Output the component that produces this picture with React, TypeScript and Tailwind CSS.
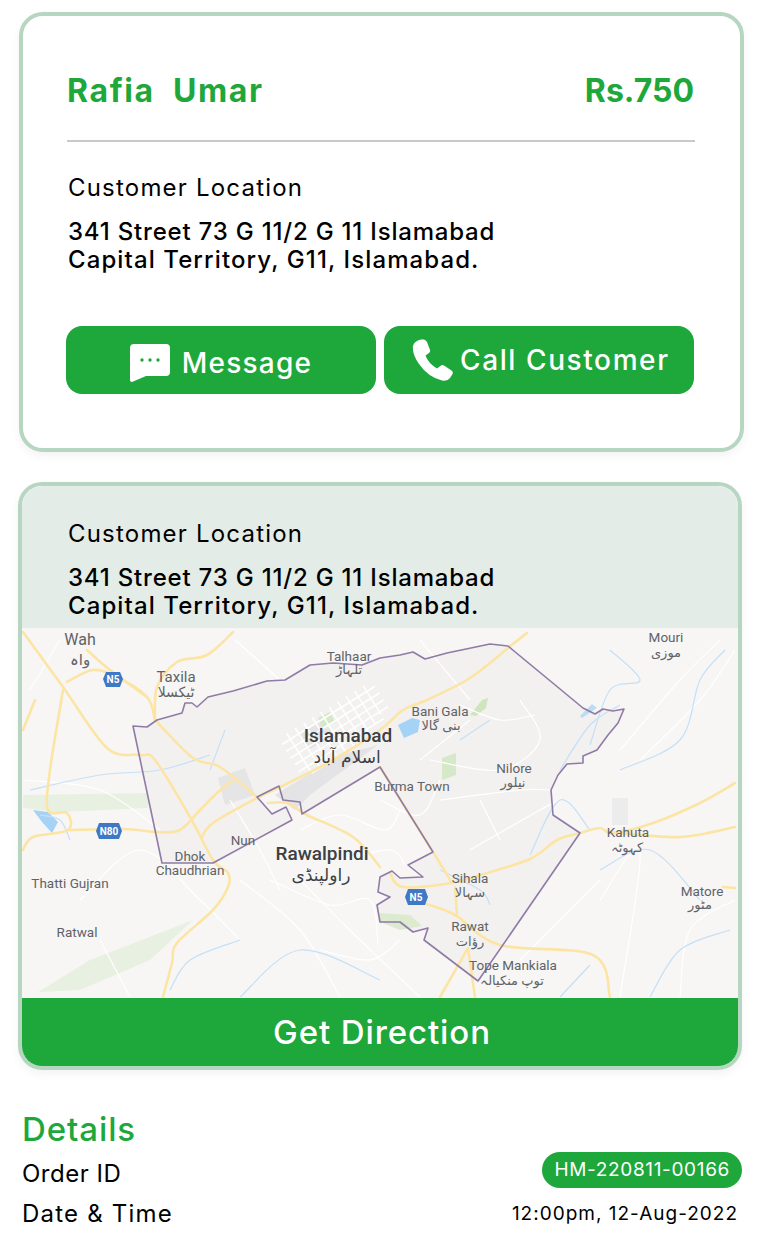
import { Fragment } from "react";

const yellowRoads = [
  "M23 632L63 687L107 748L140 755L155 760L190 817L213 860L228 873L228 887L213 910L177 943L172 963L163 997",
  "M63 690L50 770L48 810L67 813L68 830L33 837L23 850",
  "M68 830L123 829L157 832L180 830L200 810L217 793L233 780",
  "M157 722L193 758L220 767L257 797",
  "M202 837L213 823L257 798L280 787L333 760L380 730L403 710L427 700L467 680L490 663L508 648L527 633",
  "M268 803L287 803L307 815L353 837L380 867",
  "M67 682L93 670L117 677L147 697L155 720",
  "M233 632L207 655L177 662L157 687L155 720",
  "M87 650L110 670L147 697",
  "M390 873L403 887L452 883L480 875L530 859L557 840L580 833L600 828L613 833L653 823L700 803L735 783",
  "M610 832L680 837L735 827",
  "M423 903L455 915L500 945L593 955L610 997",
  "M455 887L457 915",
  "M468 948L440 997",
  "M468 948L475 997",
  "M380 767L433 852L452 883",
  "M723 887L735 888",
  "M23 730L35 700",
];

const whiteRoads = [
  "M23 780L100 790L160 830",
  "M80 900L140 850L200 900L240 940",
  "M240 880L300 930L340 997",
  "M300 880L360 940L420 997",
  "M430 760L500 770L540 740L520 700",
  "M440 800L520 790L550 790",
  "M470 850L540 810L560 800",
  "M480 800L500 840",
  "M620 750L680 680L720 640",
  "M640 760L700 700L735 650",
  "M600 900L640 850L620 997",
  "M520 960L600 880",
  "M680 997L690 930L735 900",
  "M30 690L60 640",
  "M420 640L470 700",
  "M420 760L470 720",
  "M235 640L280 680",
  "M100 940L130 997",
  "M300 830L340 815L385 830L400 810",
  "M270 880L330 905L370 900L378 945",
  "M380 800L420 815L440 780",
  "M340 860L390 850L405 865",
  "M320 950L370 960L400 940",
  "M230 800L260 850L280 890",
  "M460 705L500 720L535 715",
];

const waterLines = [
  "M30 790L100 775L160 770L210 755",
  "M560 770L590 725L620 705",
  "M620 770L680 740L700 680L725 650",
  "M530 855L560 800L590 830",
  "M600 870L650 850L700 900",
  "M650 997L680 950L730 930",
  "M240 997L300 950L380 980",
  "M70 840L60 820L40 815",
  "M440 870L480 890L490 905",
  "M225 730L210 770",
  "M560 997L590 965",
  "M590 745L610 690L640 680L610 650",
  "M170 990L190 960L240 940",
  "M490 720L460 740",
];

const labels = [
  { x: 80, y: 645, size: 16, text: "Wah" },
  { x: 80, y: 665, size: 15, text: "واہ" },
  { x: 176, y: 682, size: 15, text: "Taxila" },
  { x: 176, y: 697, size: 14, text: "ٹیکسلا" },
  { x: 349, y: 661, size: 13.5, text: "Talhaar" },
  { x: 349, y: 674, size: 13, text: "تلہاڑ" },
  { x: 440, y: 716, size: 13.5, text: "Bani Gala" },
  { x: 441, y: 730, size: 13, text: "بنی گالا" },
  { x: 514, y: 773, size: 13.5, text: "Nilore" },
  { x: 513, y: 787, size: 13, text: "نیلور" },
  { x: 412, y: 791, size: 13.5, text: "Burma Town" },
  { x: 243, y: 845, size: 13.5, text: "Nun" },
  { x: 190, y: 861, size: 13.5, text: "Dhok" },
  { x: 190, y: 875, size: 13.5, text: "Chaudhrian" },
  { x: 70, y: 888, size: 13.5, text: "Thatti Gujran" },
  { x: 77, y: 937, size: 13.5, text: "Ratwal" },
  { x: 470, y: 883, size: 13.5, text: "Sihala" },
  { x: 470, y: 897, size: 13, text: "سہالا" },
  { x: 470, y: 931, size: 13.5, text: "Rawat" },
  { x: 470, y: 946, size: 13, text: "رؤات" },
  { x: 513, y: 970, size: 13.5, text: "Tope Mankiala" },
  { x: 512, y: 985, size: 13, text: "توپ منکیالہ" },
  { x: 628, y: 837, size: 13.5, text: "Kahuta" },
  { x: 627, y: 852, size: 13, text: "کہوٹہ" },
  { x: 702, y: 896, size: 13.5, text: "Matore" },
  { x: 700, y: 909, size: 13, text: "مٹور" },
  { x: 666, y: 642, size: 13.5, text: "Mouri" },
  { x: 666, y: 657, size: 13, text: "موزی" },
];

const boundary =
  "M133 726L147 727L157 720L182 713L185 703L192 703L197 707L208 697L233 691L267 681L285 680L310 665L333 663L362 665L380 658L400 655L413 652L425 659L447 653L490 644L508 646L583 708L595 714L603 709L613 711L624 709L618 723L608 735L597 750L583 756L583 763L567 764L558 775L551 790L553 815L580 833L478 981L424 940L428 928L413 932L400 922L380 922L377 905L390 897L378 892L380 877L392 871L400 878L423 877L408 865L433 852L380 767L302 814L300 802L283 800L279 786L257 797L272 814L286 807L292 820L213 863L162 863Z";

// turns "M x y L x y ..." polylines into smooth curves so roads don't look kinked
function smooth(d: string) {
  const pts = d
    .slice(1)
    .split("L")
    .map((p) => p.split(" ").map(Number));
  let out = `M${pts[0][0]} ${pts[0][1]}`;
  for (let i = 0; i < pts.length - 1; i++) {
    const p0 = pts[i - 1] ?? pts[i];
    const p1 = pts[i];
    const p2 = pts[i + 1];
    const p3 = pts[i + 2] ?? p2;
    const c1x = p1[0] + (p2[0] - p0[0]) / 6;
    const c1y = p1[1] + (p2[1] - p0[1]) / 6;
    const c2x = p2[0] - (p3[0] - p1[0]) / 6;
    const c2y = p2[1] - (p3[1] - p1[1]) / 6;
    out += `C${c1x} ${c1y} ${c2x} ${c2y} ${p2[0]} ${p2[1]}`;
  }
  return out;
}

function MapView() {
  return (
    <svg viewBox="22 628 716 370" className="block h-[370px] w-[716px] bg-[#f7f6f4]">
      <path d="M23 795L150 793L148 808L60 812L23 808Z" fill="#e8f0e1" />
      <path d="M38 992L90 960L193 920L150 960L80 990Z" fill="#e8f0e1" />
      <path d={boundary} fill="#f3f1ef" />
      <path d="M218 778L245 768L255 795L225 805Z" fill="#e6e5e6" />
      <path d="M275 795L340 755L378 745L310 795L295 810Z" fill="#e4e4e7" />
      <path d="M298 735L322 720L335 735L308 750Z" fill="#e6e5e6" />
      <path d="M318 718L330 712L335 722L322 727Z" fill="#d5e8c8" />
      <path d="M470 715L482 700L488 698L486 708L476 716Z" fill="#cfe5bd" />
      <path d="M442 758L456 753L456 775L442 780Z" fill="#d5e8c8" />
      <path d="M380 913L410 915L422 926L400 930L380 922Z" fill="#dcebd0" />
      <path d="M612 798H628V825H612Z" fill="#ececec" />
      <path d="M398 725L412 718L420 720L418 732L404 738Z" fill="#a5d3f5" />
      <path d="M580 716L592 704L597 708L582 718Z" fill="#bcdcf6" />
      <path d="M33 810L48 812L58 822L52 833L42 822Z" fill="#a5d3f5" />
      <g fill="none" stroke="#ffffff" strokeWidth="1.2">
        {whiteRoads.map((d) => (
          <path key={d} d={smooth(d)} />
        ))}
        <g transform="rotate(-32 335 735)" strokeWidth="1.6">
          <path d="M285 715H395M285 723H395M285 731H395M285 739H395M285 747H385M295 755H365" />
          <path d="M295 708V755M305 708V755M315 708V755M325 708V755M335 708V755M345 708V755M355 708V755M365 708V755M375 708V748M385 708V742" />
        </g>
      </g>
      <g fill="none" stroke="#c4e0f7" strokeWidth="1.2">
        {waterLines.map((d) => (
          <path key={d} d={smooth(d)} />
        ))}
      </g>
      <g fill="none" stroke="#fce5a4" strokeWidth="2.6" strokeLinecap="round">
        {yellowRoads.map((d) => (
          <path key={d} d={smooth(d)} />
        ))}
      </g>
      <path d={boundary} fill="none" stroke="#8f7ba6" strokeWidth="1.6" strokeLinejoin="round" />
      <path d="M103 679L106 672H120L123 679L120 687H106Z" fill="#3f79c6" />
      <path d="M96 831L99 823H119L122 831L119 839H99Z" fill="#3f79c6" />
      <path d="M405 897L408 889H425L428 897L425 905H408Z" fill="#3f79c6" />
      <g fill="#ffffff" fontFamily="Roboto, sans-serif" fontSize="10" fontWeight="700" textAnchor="middle">
        <text x="113" y="683">N5</text>
        <text x="109" y="835">N80</text>
        <text x="416" y="901">N5</text>
      </g>
      <g fill="#5f6368" fontFamily="Roboto, 'DejaVu Sans', sans-serif" textAnchor="middle">
        {labels.map((l) => (
          <text key={l.text} x={l.x} y={l.y} fontSize={l.size}>
            {l.text}
          </text>
        ))}
      </g>
      <g fill="#3c4043" fontFamily="Roboto, 'DejaVu Sans', sans-serif" fontSize="19" fontWeight="500" textAnchor="middle">
        <text x="348" y="742">Islamabad</text>
        <text x="322" y="860">Rawalpindi</text>
      </g>
      <g fill="#3c4043" fontFamily="'DejaVu Sans', sans-serif" fontSize="17" textAnchor="middle">
        <text x="347" y="763">اسلام آباد</text>
        <text x="321" y="881">راولپنڈی</text>
      </g>
    </svg>
  );
}

function MessageIcon() {
  return (
    <svg viewBox="0 0 40 38" className="h-[38px] w-10 shrink-0">
      <path d="M4 0H36A4 4 0 0 1 40 4V28A4 4 0 0 1 36 32H16L2 38Q0 38 0 36V4A4 4 0 0 1 4 0Z" fill="#ffffff" />
      <circle cx="12" cy="16" r="1.7" fill="#1ea73b" />
      <circle cx="20" cy="16" r="1.7" fill="#1ea73b" />
      <circle cx="28" cy="16" r="1.7" fill="#1ea73b" />
    </svg>
  );
}

function PhoneIcon() {
  return (
    <svg viewBox="0 0 42 42" className="h-[42px] w-[42px] shrink-0">
      <path
        d="M9 0.5L12 0.5Q14 1 15 3L18 11Q18.6 13 17 14L13.5 16.5Q16 24 25 29.5L29 26.5Q30.5 25.5 32 26.5L39.5 31.5Q41.5 33 40.5 35L38 39Q35.5 42.5 30 41.5Q16 38 7 25Q0 15 1 7Q2 2 9 0.5Z"
        fill="#ffffff"
      />
    </svg>
  );
}

function Address() {
  return (
    <Fragment>
      <p className="text-[24px] leading-[30px] tracking-[1.2px] text-black">Customer Location</p>
      <p className="mt-[15px] text-[24px] leading-[28px] font-[450] tracking-[0.8px] text-black">
        341 Street 73 G 11/2 G 11 Islamabad
        <br />
        <span className="tracking-[1.1px]">Capital Territory, G11, Islamabad.</span>
      </p>
    </Fragment>
  );
}

export default function App() {
  return (
    <div className="min-h-[1238px] w-[762px] overflow-hidden bg-white font-['Inter',sans-serif]">
      {/* Customer card */}
      <div className="mt-3 ml-[19px] h-[440px] w-[725px] rounded-[24px] border-4 border-[#b6d6c2] bg-white px-[44px] pt-[57px] shadow-[0_4px_10px_rgba(0,0,0,0.05)]">
        <div className="flex items-center justify-between pr-[2px] text-[32px] leading-[36px] font-bold text-[#1ea73b]">
          <span className="tracking-[1.6px]">Rafia&nbsp; Umar</span>
          <span>Rs.750</span>
        </div>
        <div className="mt-[31px] h-[2px] w-[628px] bg-[#c9c9c9]" />
        <div className="mt-[31px] pl-[1px]">
          <Address />
        </div>
        <div className="mt-[52px] -ml-px flex gap-2">
          <button className="flex h-[68px] w-[310px] items-center justify-center gap-3 rounded-[16px] bg-[#1ea73b] pt-[6px] text-[28px] font-medium tracking-[1.2px] text-white">
            <MessageIcon />
            Message
          </button>
          <button className="flex h-[68px] w-[310px] items-center gap-[6px] rounded-[16px] bg-[#1ea73b] pl-7 text-[28px] font-medium tracking-[1.6px] text-white">
            <PhoneIcon />
            Call Customer
          </button>
        </div>
      </div>

      {/* Map card */}
      <div className="mt-[30px] ml-[18px] w-[724px] overflow-hidden rounded-[24px] border-4 border-[#b6d6c2] shadow-[0_4px_10px_rgba(0,0,0,0.05)]">
        <div className="h-[142px] bg-[#e3ece7] pt-[33px] pl-[46px]">
          <Address />
        </div>
        <MapView />
        <button className="block h-[68px] w-full bg-[#1ea73b] pt-px pl-1 text-[33px] font-medium tracking-[0.9px] text-white">
          Get Direction
        </button>
      </div>

      {/* Details */}
      <div className="mt-[38px] pr-[20px] pl-[22px]">
        <h2 className="text-[33px] leading-[42px] font-medium tracking-[0.9px] text-[#1ea73b]">Details</h2>
        <div className="mt-[2px] flex h-9 items-center justify-between">
          <span className="pt-2 text-[24px] tracking-[0.5px] text-black">Order ID</span>
          <span className="rounded-full bg-[#1ea73b] px-3 py-1 text-[19px] leading-[28px] tracking-[0.65px] text-white">
            HM-220811-00166
          </span>
        </div>
        <div className="mt-2 flex h-9 items-center justify-between pr-[4px]">
          <span className="text-[24px] tracking-[1.2px] text-black">Date &amp; Time</span>
          <span className="text-[19px] tracking-[1px] text-black">12:00pm, 12-Aug-2022</span>
        </div>
      </div>
    </div>
  );
}
